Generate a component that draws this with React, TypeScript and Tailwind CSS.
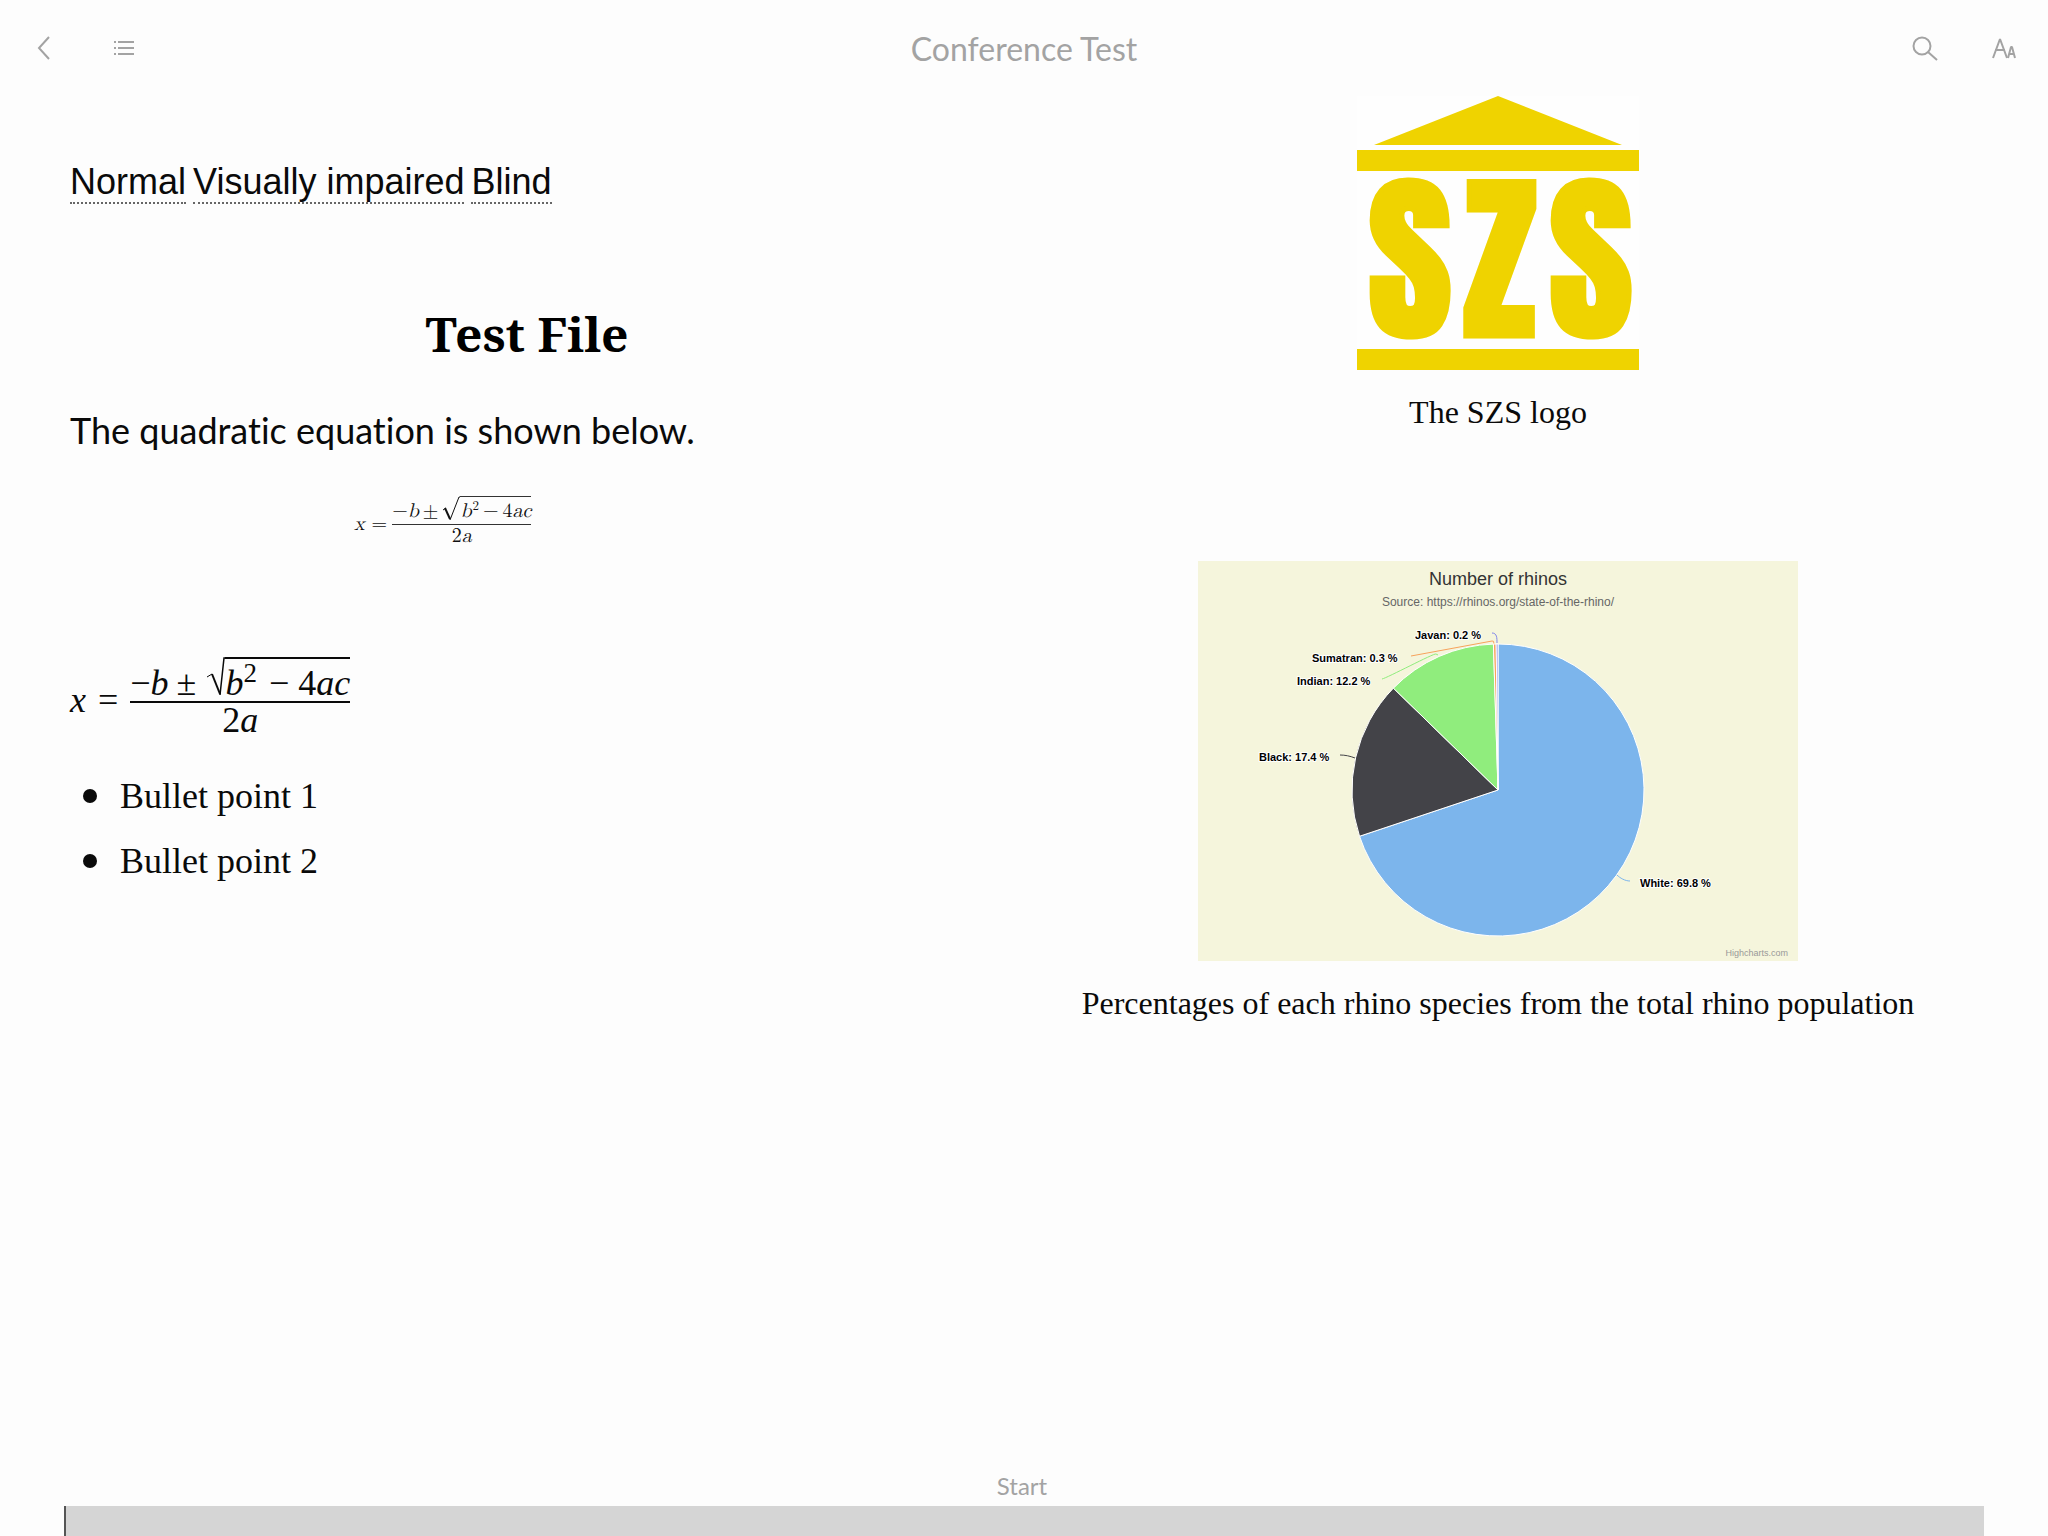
import React from "react";

const slices = [
  { name: "White", value: 69.8, color: "#7cb5ec", label: "White: 69.8 %", x: 442, y: 326, line: "M419 314 C422 317 427 320 432 320" },
  { name: "Black", value: 17.4, color: "#434348", label: "Black: 17.4 %", x: 61, y: 200, line: "M142 194 C147 194 152 195 157 197" },
  { name: "Indian", value: 12.2, color: "#90ed7d", label: "Indian: 12.2 %", x: 99, y: 124, line: "M184 118 C189 117 236 92 238 93 L240 94" },
  { name: "Sumatran", value: 0.3, color: "#f7a35c", label: "Sumatran: 0.3 %", x: 114, y: 101, line: "M213 95 L294 80 Q296 79 296 83" },
  { name: "Javan", value: 0.2, color: "#8085e9", label: "Javan: 0.2 %", x: 217, y: 78, line: "M294 72 C299 72 299 77 299 82" },
];

const CX = 300;
const CY = 229;
const R = 146;
const total = slices.reduce((sum, s) => sum + s.value, 0);

function point(fraction: number) {
  const a = fraction * Math.PI * 2;
  return `${(CX + R * Math.sin(a)).toFixed(2)} ${(CY - R * Math.cos(a)).toFixed(2)}`;
}

function slicePath(index: number) {
  const before = slices.slice(0, index).reduce((sum, s) => sum + s.value, 0);
  const start = before / total;
  const end = (before + slices[index].value) / total;
  const large = end - start > 0.5 ? 1 : 0;
  return `M${CX} ${CY} L${point(start)} A${R} ${R} 0 ${large} 1 ${point(end)} Z`;
}

function RhinoChart() {
  return (
    <svg
      viewBox="0 0 600 400"
      className="h-[400px] w-[600px] bg-[#f5f5dc] font-['Liberation_Sans',sans-serif]"
      role="img"
      aria-label="Pie chart of the number of rhinos"
    >
      <text x="300" y="24" textAnchor="middle" className="fill-[#333333] text-[18px]">Number of rhinos</text>
      <text x="300" y="45" textAnchor="middle" className="fill-[#666666] text-[12px]">
        Source: https://rhinos.org/state-of-the-rhino/
      </text>
      {slices.map((s) => (
        <path key={s.name} d={s.line} fill="none" stroke={s.color} strokeWidth="1" />
      ))}
      {slices.map((s, i) => (
        <path key={s.name} d={slicePath(i)} fill={s.color} stroke="#ffffff" strokeWidth="1" strokeLinejoin="round" />
      ))}
      {slices.map((s) => (
        <text
          key={s.name}
          x={s.x}
          y={s.y}
          stroke="#ffffff"
          strokeWidth="2"
          strokeLinejoin="round"
          paintOrder="stroke"
          className="fill-black text-[11px] font-bold"
        >
          {s.label}
        </text>
      ))}
      <text x="590" y="395" textAnchor="end" className="fill-[#999999] text-[9px]">Highcharts.com</text>
    </svg>
  );
}

function SzsLogo() {
  return (
    <svg viewBox="0 0 282 274" className="h-[274px] w-[282px] overflow-visible bg-[#fefefe]" role="img" aria-label="SZS logo">
      <g fill="#efd300">
        <path d="M141 0 L265 49 L17 49 Z" />
        <rect x="0" y="54" width="282" height="21" />
        <rect x="0" y="253" width="282" height="21" />
        <text
          x="53 143 234"
          y="240"
          textAnchor="middle"
          stroke="#efd300"
          strokeWidth="5"
          className="font-['Impact','Anton','Open_Sans_Condensed','Roboto_Condensed',sans-serif] text-[180px] font-normal"
        >
          SZS
        </text>
      </g>
    </svg>
  );
}

function InlineFormula() {
  return (
    <div
      className="flex items-start font-['Latin_Modern_Math','Liberation_Serif',serif] text-[20px] leading-[22px] text-[#111]"
      role="math"
    >
      <i className="mt-[17px]">x</i>
      <span className="mt-[17px] mr-[5px] ml-[7px]">=</span>
      <div className="flex flex-col items-center">
        <div className="flex border-b border-[#333] pb-[2px]">
          <span className="pt-1">−<i>b</i></span>
          <span className="mr-1 ml-1 pt-1">±</span>
          <svg viewBox="0 0 18 26" className="h-[26px] w-[18px]" fill="none" stroke="#111" aria-hidden="true">
            <path d="M1 14 L4 12" />
            <path d="M3 12 L8 23" strokeWidth="2" />
            <path d="M8 24 L17 1 H18" />
          </svg>
          <span className="flex border-t border-[#333] pt-[3px]">
            <i>b</i>
            <span className="-mt-1 ml-px text-[13px]">2</span>
            <span className="mx-1">−</span>
            <span>4<i>ac</i></span>
          </span>
        </div>
        <span>2<i>a</i></span>
      </div>
    </div>
  );
}

function DisplayFormula() {
  return (
    <div className="flex items-start font-['Liberation_Serif',serif] text-[36px] leading-[36px]" role="math">
      <i className="mt-[25px]">x</i>
      <span className="mx-3 mt-[25px]">=</span>
      <div className="flex flex-col items-center">
        <div className="flex border-b-2 border-[#0a0a0a]">
          <span className="pt-2">−<i>b</i></span>
          <span className="mr-[11px] ml-2 pt-2">±</span>
          <svg viewBox="0 0 18 44" className="h-11 w-[18px]" fill="none" stroke="#0a0a0a" aria-hidden="true">
            <path d="M0 20 L5 17" />
            <path d="M5 17 L13 37" strokeWidth="2" />
            <path d="M13 38 L17 1 H18" strokeWidth="1.5" />
          </svg>
          <span className="flex border-t-2 border-[#0a0a0a] pt-[6px]">
            <i>b</i>
            <span className="-mt-[10px] text-[27px]">2</span>
            <span className="mr-[9px] ml-3">−</span>
            <span>4<i>ac</i></span>
          </span>
        </div>
        <span className="-mt-px">2<i>a</i></span>
      </div>
    </div>
  );
}

const linkClass = "border-b-2 border-dotted border-[#666]";

export default function App() {
  return (
    <div className="flex min-h-screen flex-col bg-[#fdfdfd] text-[#0a0a0a]">
      <header className="grid h-24 grid-cols-[1fr_auto_1fr] items-center px-7 text-[#a3a3a3]">
        <nav className="flex items-center gap-11" aria-label="Book">
          <button type="button" aria-label="Back" className="flex size-8 items-center justify-center">
            <svg viewBox="0 0 32 32" className="size-8" fill="none" stroke="currentColor" strokeWidth="2">
              <path d="M21 5 L11 16 L21 27" />
            </svg>
          </button>
          <button type="button" aria-label="Contents" className="flex size-8 items-center justify-center">
            <svg viewBox="0 0 32 32" className="size-8" fill="none" stroke="currentColor" strokeWidth="2">
              <path d="M14 10 H30 M14 16 H30 M14 22 H30 M10 10 H12 M10 16 H12 M10 22 H12" />
            </svg>
          </button>
        </nav>
        <h1 className="pt-[2px] font-['Lato',sans-serif] text-[32px] leading-10">Conference Test</h1>
        <nav className="flex items-center justify-end gap-12" aria-label="Tools">
          <button type="button" aria-label="Search">
            <svg viewBox="0 0 32 32" className="size-8" fill="none" stroke="currentColor" strokeWidth="2">
              <circle cx="14" cy="14" r="8.5" />
              <path d="M20 20 L29 28" />
            </svg>
          </button>
          <button type="button" aria-label="Text size">
            <svg viewBox="0 0 32 32" className="size-8" fill="none" stroke="currentColor" strokeWidth="2" strokeLinejoin="bevel">
              <path d="M5 26 L12 7 L19 26 M7 18 H17" />
              <path d="M20 26 L23 15 H24 L27 26 M21 22 H26" />
            </svg>
          </button>
        </nav>
      </header>

      <main className="grid flex-1 grid-cols-2 gap-[57px] pr-[93px] pl-[70px]">
        <section>
          <nav
            aria-label="Versions"
            className="mt-[66px] flex flex-wrap gap-x-[7px] font-['Liberation_Sans',sans-serif] text-[36px] leading-10"
          >
            <a href="#normal" className={linkClass}>Normal</a>
            <a href="#impaired" className={linkClass}>Visually impaired</a>
            <a href="#blind" className={linkClass}>Blind</a>
          </nav>
          <h2 className="mt-[98px] text-center font-['Noto_Serif','DejaVu_Serif_Condensed','Liberation_Serif',serif] text-[48px] leading-[64px] font-bold text-black">
            Test File
          </h2>
          <p className="mt-10 font-['Lato',sans-serif] text-[36px] leading-[48px] [font-variant-ligatures:none]">
            The quadratic equation is shown below.
          </p>
          <div className="mt-[42px] ml-[284px]"><InlineFormula /></div>
          <div className="mt-[110px]"><DisplayFormula /></div>
          <ul className="mt-[34px] space-y-[17px] font-['Liberation_Serif',serif] text-[36px] leading-[48px]">
            {["Bullet point 1", "Bullet point 2"].map((item) => (
              <li key={item} className="flex items-center pl-[13px]">
                <span className="mr-[23px] size-[14px] rounded-full bg-[#0a0a0a]" />
                {item}
              </li>
            ))}
          </ul>
        </section>

        <section className="flex flex-col items-center font-['Liberation_Serif',serif] text-[32px] leading-10">
          <figure className="flex flex-col items-center gap-[22px]">
            <SzsLogo />
            <figcaption>The SZS logo</figcaption>
          </figure>
          <figure className="mt-[129px] flex flex-col items-center gap-[22px]">
            <RhinoChart />
            <figcaption>Percentages of each rhino species from the total rhino population</figcaption>
          </figure>
        </section>
      </main>

      <footer className="px-16">
        <p className="pr-1 pb-[2px] text-center font-['Lato',sans-serif] text-[24px] leading-9 text-[#a3a3a3]">Start</p>
        <div className="h-[30px] border-l-2 border-[#555] bg-[#d5d5d5]" />
      </footer>
    </div>
  );
}
